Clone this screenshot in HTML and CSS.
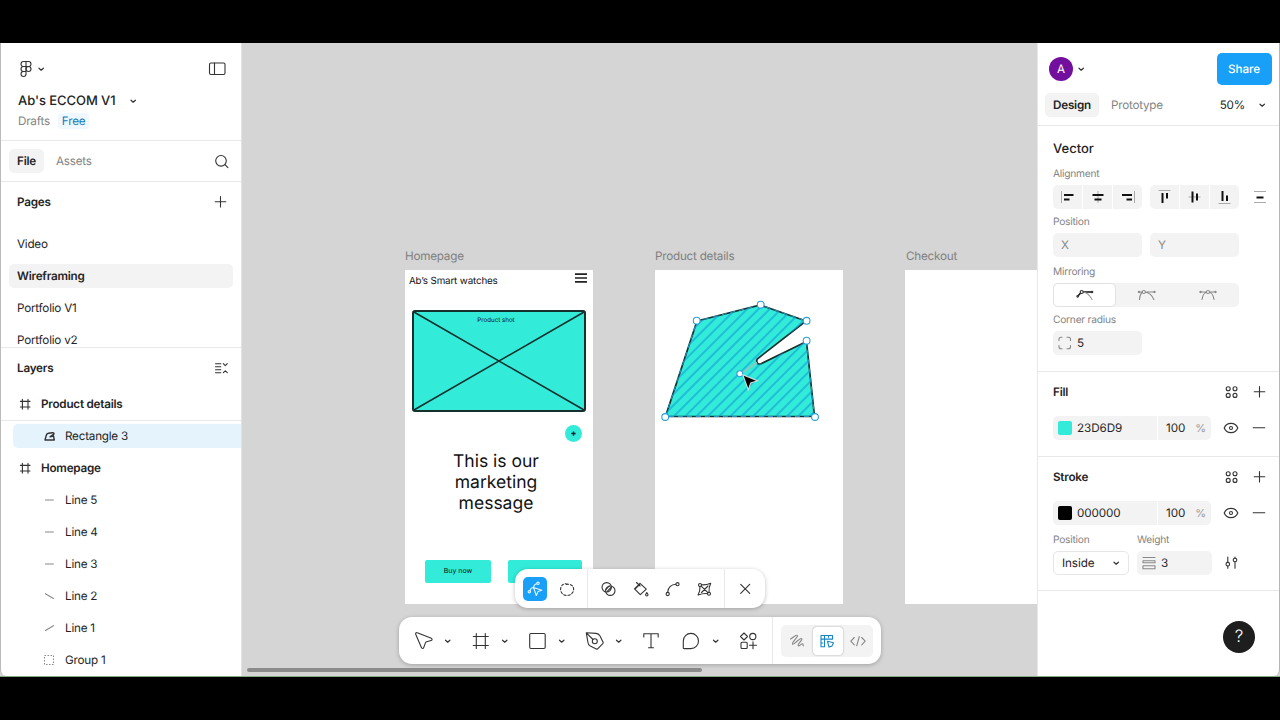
FILE: index.html
```html
<!DOCTYPE html>
<html lang="en">
<head>
  <meta charset="utf-8">
  <title>Ab's ECCOM V1</title>
  <link rel="stylesheet" href="styles.css">
</head>
<body>
  <!-- Icon sprite -->
  <svg class="sprite" xmlns="http://www.w3.org/2000/svg">
    <symbol id="chevron" viewBox="0 0 16 16"><path d="M6 7.200 8.200 9.200l2.200-2"/></symbol>
    <symbol id="plus" viewBox="0 0 24 24"><path d="M11.500 6.500v10.500M6.200 11.700h10.600"/></symbol>
    <symbol id="minus" viewBox="0 0 24 24"><path d="M6.200 11.700h11.600"/></symbol>
    <symbol id="frame" viewBox="0 0 24 24"><path d="M9.400 7.300v9.800M15 7.300v9.800M7.400 9.400h9.600M7.400 15h9.600"/></symbol>
    <symbol id="line" viewBox="0 0 24 24"><path d="M8.400 12h8"/></symbol>
    <symbol id="styles" viewBox="0 0 24 24"><circle cx="8.200" cy="8.700" r="2"/><circle cx="15" cy="8.700" r="2"/><circle cx="8.200" cy="15.400" r="2"/><circle cx="15" cy="15.400" r="2"/></symbol>
    <symbol id="eye" viewBox="0 0 24 24"><path d="M5.200 12C6.400 9 9 7.400 12 7.400S17.600 9 18.800 12C17.600 15 15 16.600 12 16.600S6.400 15 5.200 12z"/><circle cx="12" cy="12" r="1.500"/></symbol>
  </svg>

  <div class="window">
    <aside class="sidebar">
      <div class="file-head">
        <div class="file-row">
          <svg class="icon logo" viewBox="0 0 12 18"><path d="M6 1.500H3.500a2.500 2.500 0 0 0 0 5H6zM6 1.500h2.500a2.500 2.500 0 0 1 0 5H6zM6 6.500H3.500a2.500 2.500 0 0 0 0 5H6zM6 11.500H3.500A2.500 2.500 0 1 0 6 14z"/><circle cx="8.500" cy="9" r="2.500"/></svg>
          <svg class="icon chev"><use href="#chevron"/></svg>
          <svg class="icon panel-toggle" viewBox="0 0 24 24"><rect x="4.500" y="6" width="15.500" height="11.500" rx="1.500"/><path d="M9.500 6v11.500"/></svg>
        </div>
        <div class="file-name">Ab's ECCOM V1 <svg class="icon chev"><use href="#chevron"/></svg></div>
        <div class="file-meta"><span>Drafts</span><span class="plan">Free</span></div>
      </div>

      <div class="tabs">
        <span class="tab active">File</span>
        <span class="tab">Assets</span>
        <svg class="icon i24 push" viewBox="0 0 24 24"><circle cx="12" cy="11.800" r="5.300"/><path d="m15.900 15.700 3 3"/></svg>
      </div>

      <div class="pages">
        <div class="section-title">Pages <svg class="icon i24 push"><use href="#plus"/></svg></div>
        <ul class="page-list">
          <li>Video</li>
          <li class="current">Wireframing</li>
          <li>Portfolio V1</li>
          <li>Portfolio v2</li>
        </ul>
      </div>

      <div class="layers">
        <div class="section-title">Layers
          <svg class="icon i24 push" viewBox="0 0 24 24"><path d="M6.500 7.700h5.300M6.500 10.700h5.300M6.500 13.700h5.300M6.500 16.700h5.300M14.300 7.700l2 1.900 2-1.900M14.300 16.700l2-1.900 2 1.900"/></svg>
        </div>
        <ul class="layer-list">
          <li class="top sticky"><svg class="icon i24"><use href="#frame"/></svg>Product details</li>
          <li class="child selected"><div><svg class="icon i24 bold" viewBox="0 0 24 24"><path d="M8 16 9.300 11.200Q9.800 9.400 11.500 9.200L15.500 8.800Q17.300 8.700 16.900 10.200L13 12.800 16.500 12 17.300 16z"/></svg>Rectangle 3</div></li>
          <li class="top"><svg class="icon i24"><use href="#frame"/></svg>Homepage</li>
          <li class="child"><svg class="icon i24 dim"><use href="#line"/></svg>Line 5</li>
          <li class="child"><svg class="icon i24 dim"><use href="#line"/></svg>Line 4</li>
          <li class="child"><svg class="icon i24 dim"><use href="#line"/></svg>Line 3</li>
          <li class="child"><svg class="icon i24 dim" viewBox="0 0 24 24"><path d="m8.400 9.700 8 4.800"/></svg>Line 2</li>
          <li class="child"><svg class="icon i24 dim" viewBox="0 0 24 24"><path d="m8.400 14.500 8-4.800"/></svg>Line 1</li>
          <li class="child"><svg class="icon i24 dim dotted" viewBox="0 0 24 24"><rect x="7.500" y="7.500" width="9" height="9"/></svg>Group 1</li>
        </ul>
      </div>
    </aside>

    <main class="canvas">
      <div class="artboard homepage">
        <span class="label">Homepage</span>
        <div class="site-head">
          <span>Ab’s Smart watches</span>
          <svg class="burger" viewBox="0 0 12 10"><path d="M0 1.200h12M0 5h12M0 8.800h12"/></svg>
        </div>
        <div class="product-shot">
          <svg viewBox="0 0 170 98" preserveAspectRatio="none"><path d="M0 0l170 98M170 0 0 98"/></svg>
          <span>Product shot</span>
        </div>
        <div class="add-dot"><svg viewBox="0 0 16 16"><path d="M8 6v4M6 8h4"/></svg></div>
        <p class="message">This is our marketing message</p>
        <div class="cta-row">
          <span class="cta">Buy now</span>
          <span class="cta wide"></span>
        </div>
      </div>

      <div class="artboard details">
        <span class="label">Product details</span>
        <svg class="shape" viewBox="655 270 188 334">
          <defs>
            <pattern id="hatch" width="8" height="8" patternUnits="userSpaceOnUse" patternTransform="rotate(45 697 321)">
              <path d="M4 0v8" stroke="#129fd9" stroke-width="1.200"/>
            </pattern>
          </defs>
          <path class="body" d="M697 321 760.500 305 806 321 757.500 358.800Q756 361 757.500 363.200 758.500 364.800 761 363.700L806.500 341.500 814.500 416.500H665.500z"/>
          <path fill="url(#hatch)" d="M697 321 760.500 305 806 321 757.500 358.800Q756 361 757.500 363.200 758.500 364.800 761 363.700L806.500 341.500 814.500 416.500H665.500z"/>
          <path class="outline" d="M665.500 416.500 697 321 760.500 305 806 321M806.500 341.500 814.500 416.500H665.500"/>
          <path class="guide" d="M757 362.500 741 373.500"/>
          <g class="points">
            <circle cx="696.700" cy="320.700" r="3.400"/><circle cx="760.700" cy="304.700" r="3.400"/><circle cx="806.600" cy="320.800" r="3.400"/><circle cx="806.600" cy="340.700" r="3.400"/><circle cx="815" cy="417" r="3.400"/><circle cx="665.200" cy="417" r="3.400"/><circle cx="739.800" cy="373.800" r="3"/>
          </g>
          <path class="cursor" d="M743.700 375.800 756 380.700 750.300 382.600 748.300 388.300z"/>
        </svg>
      </div>

      <div class="artboard checkout"><span class="label">Checkout</span></div>

      <div class="scrollbar"></div>

      <div class="toolbar vector-bar">
        <span class="vtool active"><svg class="icon i24" viewBox="0 0 24 24"><path d="m10.500 10.500 8.300 2.700-3.800 1.400-1.700 3.900zM7 14c.4-2.200 1.500-3.400 3.500-3.500M10.500 10.500c.2-1.700 1.300-3.300 3.300-3.700"/><circle cx="6.300" cy="14.700" r="1.200"/><circle cx="15" cy="6.300" r="1.200"/></svg></span>
        <span class="vtool"><svg class="icon i24" viewBox="0 0 24 24"><path stroke-dasharray="2.300 1.900" d="M12.500 7.200C9 5.500 5.600 8.500 5.600 12.300c0 3.600 2.800 6.100 6.300 6.100 3.700 0 6.700-2.600 6.700-6.200 0-4-4.300-6.200-8.600-4.200"/></svg></span>
        <span class="divider"></span>
        <span class="vtool"><svg class="icon i24" viewBox="0 0 24 24"><circle cx="10.700" cy="10.300" r="4.700"/><circle cx="14.300" cy="13.700" r="4.700"/><path d="m10 12.300 3.300-3.400M11.300 14.300l3.700-3.800"/></svg></span>
        <span class="vtool"><svg class="icon i24" viewBox="0 0 24 24"><path d="m8.500 5.500 3.600 3.500M12 6.300l6.300 5.900-6 5.500-5.800-5.900 5.500-5.500M7 12l4.500-4.500"/><path d="M18.800 15.500c-.9 1.400-1.200 1.800-1.200 2.300a1.200 1.200 0 0 0 2.400 0c0-.5-.3-.9-1.200-2.300z"/></svg></span>
        <span class="vtool"><svg class="icon i24" viewBox="0 0 24 24"><circle cx="7.700" cy="17" r="1.600"/><circle cx="17.500" cy="7.200" r="1.600"/><path d="M7.700 15.300c0-4.500 3.500-8.100 8.200-8.100"/></svg></span>
        <span class="vtool"><svg class="icon i24" viewBox="0 0 24 24"><circle cx="8" cy="8" r="1.500"/><circle cx="17" cy="16.800" r="1.500"/><path d="M9.500 7.700c3 .5 6-.2 9.200-1.500-1.500 3-1.900 6-1.700 9.100M15.500 16.700c-3.200-.6-6 .1-9.400 1.300 1.500-2.900 2-5.200 1.900-8.500M9.200 9.200l6.700 6.500M9.500 15.500l6.500-6.500"/></svg></span>
        <span class="divider"></span>
        <span class="vtool"><svg class="icon i24" viewBox="0 0 24 24"><path d="m7.700 7.300 9 9M16.700 7.300l-9 9"/></svg></span>
      </div>

      <div class="toolbar main-bar">
        <div class="tool"><svg class="icon" viewBox="0 0 32 32"><path d="M8.700 9.300c-.4-1.100.5-2 1.600-1.500l14 5.500c1.100.5 1 1.900-.1 2.200l-4.600 1.300c-.6.200-1 .5-1.200 1.100l-1.700 4.700c-.4 1.100-1.800 1.100-2.300 0z"/></svg></div>
        <svg class="icon chev"><use href="#chevron"/></svg>
        <div class="tool"><svg class="icon" viewBox="0 0 32 32"><path d="M12.300 8.500v15M21.300 8.500v15M9.300 11.500h15M9.300 20.500h15"/></svg></div>
        <svg class="icon chev"><use href="#chevron"/></svg>
        <div class="tool"><svg class="icon" viewBox="0 0 32 32"><rect x="8.700" y="8.500" width="15.500" height="15" rx="1.200"/></svg></div>
        <svg class="icon chev"><use href="#chevron"/></svg>
        <div class="tool"><svg class="icon" viewBox="0 0 32 32"><path d="m8.300 7.800 9.800.6a5 5 0 0 1 3.800 2.400l3.200 6.400c.3.600.1 1.100-.3 1.500l-4.900 5c-.5.500-1 .5-1.600.2l-6-3a4.600 4.600 0 0 1-2.400-3.700zM8.300 7.800l6.700 6.700"/><circle cx="16.800" cy="16.300" r="2.500"/></svg></div>
        <svg class="icon chev"><use href="#chevron"/></svg>
        <div class="tool"><svg class="icon" viewBox="0 0 32 32"><path d="M8.800 12V8.800h14.400V12M16 8.800v14M13.500 22.800h5"/></svg></div>
        <div class="tool"><svg class="icon" viewBox="0 0 32 32"><path d="M8.300 23.200V16a7.600 7.600 0 1 1 7.600 7.600H9.300c-.7 0-1-.2-1-.6z"/></svg></div>
        <svg class="icon chev"><use href="#chevron"/></svg>
        <div class="tool"><svg class="icon" viewBox="0 0 32 32"><path d="m12 8 3.500 3.500L12 15l-3.500-3.500zM21 16.800v7M17.500 20.300h7"/><circle cx="20.800" cy="11.500" r="3.100"/><rect x="9" y="17.300" width="6.200" height="6.200" rx="1"/></svg></div>
        <span class="divider"></span>
        <div class="mode-switch">
          <span><svg class="icon dim" viewBox="0 0 30 30"><path d="M9.500 13C12 11.500 15 8.600 16.300 9.400c1.500 1.100-6 7.300-4.800 8.700 1.300 1.300 7.500-6.900 9.200-5.600 1.500 1.200-4.600 5.800-3.600 7.200.9 1.100 3.300-2.300 4.500-2 .9.300 0 1.700.8 2.200"/></svg></span>
          <span class="on"><svg class="icon" viewBox="0 0 30 30"><path d="M9 9.500h11.500v3.600h-8v7.700H9zM12.500 9.500v3.600M9 13.100h3.500M16.500 9.500v1.800M9 17h1.700M15.500 15.300l6 1.400-1.700 3.500-2.800.9z"/></svg></span>
          <span><svg class="icon dim" viewBox="0 0 30 30"><path d="m11.300 11.500-3.500 3.700 3.500 3.700M18.700 11.500l3.500 3.700-3.500 3.700M16.300 10.500l-2.600 9.300"/></svg></span>
        </div>
      </div>
    </main>

    <aside class="inspector">
      <div class="user-row">
        <span class="avatar">A</span>
        <svg class="icon chev"><use href="#chevron"/></svg>
        <button class="share">Share</button>
      </div>
      <div class="mode-row">
        <span class="tab active">Design</span>
        <span class="tab">Prototype</span>
        <span class="zoom">50%</span>
        <svg class="icon chev"><use href="#chevron"/></svg>
      </div>

      <section class="group vector">
        <h2>Vector</h2>
        <label>Alignment</label>
        <div class="row">
          <div class="align-set">
            <span><svg viewBox="0 0 24 24"><path class="thin" d="M5.500 6v12"/><path class="bar" d="M8 10h9.500M8 14.500h5.500"/></svg></span>
            <span><svg viewBox="0 0 24 24"><path class="thin" d="M12 6v12"/><path class="bar" d="M6.500 10h11M8.500 14.500h7"/></svg></span>
            <span><svg viewBox="0 0 24 24"><path class="thin" d="M18.500 6v12"/><path class="bar" d="M6 10h10M10.500 14.500H16"/></svg></span>
          </div>
          <div class="align-set">
            <span><svg viewBox="0 0 24 24"><path class="thin" d="M5.500 5.500h12"/><path class="bar" d="M9.500 8v10M14 8v5.500"/></svg></span>
            <span><svg viewBox="0 0 24 24"><path class="thin" d="M5.500 12h12"/><path class="bar" d="M9.500 6.500v11M14 8.500v7"/></svg></span>
            <span><svg viewBox="0 0 24 24"><path class="thin" d="M5.500 18.500h12"/><path class="bar" d="M9.500 6v10M14 10.500V16"/></svg></span>
          </div>
          <svg class="spacing" viewBox="0 0 24 24"><path class="thin" d="M6 6.500h12M6 17.500h12"/><path class="bar" d="M8.500 12.500h7"/></svg>
        </div>
        <label>Position</label>
        <div class="row">
          <div class="field axis">X</div>
          <div class="field axis">Y</div>
        </div>
        <label class="mirror-label">Mirroring</label>
        <div class="mirror">
          <span class="on"><svg class="icon" viewBox="0 0 24 24"><path class="heavy" d="M4.500 13.500 8.500 9H19"/><path class="faint" d="M10 9c4 .5 7 3.500 9 7.500"/><circle cx="8.700" cy="9" r="1.500"/><circle class="dot" cx="4.700" cy="13.300" r=".8"/><circle class="dot" cx="19" cy="9" r=".8"/></svg></span>
          <span><svg class="icon dim" viewBox="0 0 24 24"><path d="M4 9h15.500M4.500 16.500C4.800 13 5.500 10.500 7.500 9M10 9c4 .7 7.300 3.700 8.800 7.500"/><circle cx="8.800" cy="9" r="1.500"/><circle class="dot" cx="4" cy="9" r=".6"/><circle class="dot" cx="19.500" cy="9" r=".6"/></svg></span>
          <span><svg class="icon dim" viewBox="0 0 24 24"><path d="M4.300 9h15.400M6 16.500C6.500 12 9 9 12 9s5.500 3 6 7.500"/><circle cx="12" cy="9" r="1.500"/><circle class="dot" cx="4.500" cy="9" r=".6"/><circle class="dot" cx="19.500" cy="9" r=".6"/></svg></span>
        </div>
        <label class="corner-label">Corner radius</label>
        <div class="field corner"><svg class="icon i24 dim" viewBox="0 0 24 24"><path d="M6 9.500V8.200a2 2 0 0 1 2-2h1M14 6.200h1.500a2 2 0 0 1 2 2v1.300M17.500 14.500v1.300a2 2 0 0 1-2 2H14M9 17.800H8a2 2 0 0 1-2-2v-1.300"/></svg>5</div>
      </section>

      <section class="group fill">
        <div class="group-head"><h3>Fill</h3><svg class="icon i24"><use href="#styles"/></svg><svg class="icon i24"><use href="#plus"/></svg></div>
        <div class="paint">
          <div class="field colour"><i class="swatch teal"></i>23D6D9</div>
          <div class="field opacity">100 <em>%</em></div>
          <svg class="icon i24"><use href="#eye"/></svg>
          <svg class="icon i24"><use href="#minus"/></svg>
        </div>
      </section>

      <section class="group stroke">
        <div class="group-head"><h3>Stroke</h3><svg class="icon i24"><use href="#styles"/></svg><svg class="icon i24"><use href="#plus"/></svg></div>
        <div class="paint">
          <div class="field colour"><i class="swatch black"></i>000000</div>
          <div class="field opacity">100 <em>%</em></div>
          <svg class="icon i24"><use href="#eye"/></svg>
          <svg class="icon i24"><use href="#minus"/></svg>
        </div>
        <div class="stroke-opts">
          <label>Position</label>
          <label>Weight</label>
          <span></span>
          <div class="select">Inside <svg class="icon chev"><use href="#chevron"/></svg></div>
          <div class="field weight"><svg class="icon i24 dim" viewBox="0 0 24 24"><path d="M6 6.500h12"/><rect x="6" y="9.700" width="12" height="2"/><rect x="6" y="14.800" width="12" height="3"/></svg>3</div>
          <svg class="icon i24" viewBox="0 0 24 24"><path d="M7.800 6v5.500M7.800 15v2.300M15 6v1.200M15 10.800v6.500"/><circle cx="7.800" cy="13.200" r="1.800"/><circle cx="15" cy="9" r="1.800"/></svg>
        </div>
      </section>

      <span class="help">?</span>
    </aside>
  </div>
</body>
</html>
```
FILE: styles.css
```css
:root {
  --text: #242424;
  --muted: #848484;
  --line: #e8e8e8;
  --field: #f3f3f3;
  --blue: #189ff8;
  --teal: #32ebd8;
  --canvas: #d5d5d5;
}

* {
  box-sizing: border-box;
  margin: 0;
  padding: 0;
}

body {
  width: 1280px;
  height: 720px;
  padding: 43px 0;
  overflow: hidden;
  background: #000;
  color: var(--text);
  font-family: Inter, sans-serif;
  font-size: 11.700px;
  letter-spacing: -.23px;
  line-height: 16px;
  text-rendering: geometricPrecision;
}

ul {
  list-style: none;
}

.sprite {
  display: none;
}

.window {
  display: grid;
  grid-template-columns: 242px 1fr 243px;
  height: 634px;
  overflow: hidden;
  background: var(--canvas);
  border-bottom: 1px solid #87a987;
}

/* Icons */
.icon {
  flex: none;
  fill: none;
  stroke: #333;
  stroke-width: 1.1;
  stroke-linecap: round;
  stroke-linejoin: round;
}

.i24 {
  width: 24px;
  height: 24px;
}

.chev {
  width: 16px;
  height: 16px;
  stroke-width: 1.2;
}

.dim {
  stroke: #888;
}

.bold {
  stroke-width: 1.400;
}

.push {
  margin-left: auto;
}

.dot {
  fill: currentColor;
}

/* Left sidebar */
.sidebar {
  background: #fff;
  border-left: 1px solid #bbb;
  border-right: 1px solid #e2e2e2;
  border-bottom-left-radius: 6px;
  overflow: hidden;
}

.file-head {
  height: 98px;
  padding: 13px 12px 0 17px;
  border-bottom: 1px solid var(--line);
}

.file-row {
  display: flex;
  align-items: center;
  height: 25px;
}

.logo {
  width: 16px;
  height: 18px;
}

.file-row .chev {
  margin-left: -1px;
}

.panel-toggle {
  width: 24px;
  height: 24px;
  margin-left: auto;
}

.file-name {
  display: flex;
  align-items: center;
  height: 20px;
  margin-top: 9.500px;
  font-size: 13px;
  font-weight: 500;
  letter-spacing: -.060px;
}

.file-name .chev {
  margin-left: 9px;
}

.file-meta {
  display: flex;
  align-items: center;
  gap: 8px;
  height: 20px;
  color: var(--muted);
}

.plan {
  padding: 0 4px;
  border-radius: 4px;
  background: #eff8fe;
  color: #1779b8;
}

.tabs {
  display: flex;
  align-items: center;
  height: 41px;
  padding: 0 8px;
  border-bottom: 1px solid var(--line);
}

.tab {
  padding: 4px 8px;
  border-radius: 5px;
  color: var(--muted);
}

.tab.active {
  background: var(--field);
  color: var(--text);
  font-weight: 600;
}

.tabs .tab + .tab {
  margin-left: 4px;
}

.section-title {
  display: flex;
  align-items: center;
  height: 40px;
  padding: 0 8px 0 16px;
  font-weight: 600;
}

.pages {
  height: 166px;
  overflow: hidden;
  border-bottom: 1px solid var(--line);
}

.page-list {
  padding: 6px 8px;
}

.page-list li {
  height: 24px;
  margin: 4px 0 8px;
  padding: 4px 8px;
  border-radius: 5px;
}

.page-list .current {
  background: var(--field);
  font-weight: 600;
}

.layer-list li,
.layer-list li div {
  display: flex;
  align-items: center;
}

.layer-list li {
  height: 32px;
}

.layer-list .top {
  gap: 4px;
  padding-left: 12px;
  font-weight: 600;
}

.layer-list .sticky {
  box-shadow: 0 1px 0 var(--line);
}

.layer-list .child {
  gap: 4px;
  padding-left: 36px;
}

.layer-list .selected {
  padding-left: 12px;
}

.selected div {
  gap: 4px;
  width: 100%;
  height: 24px;
  padding-left: 24px;
  border-radius: 5px 0 0 5px;
  background: #e5f4fc;
}

.dotted {
  stroke-linecap: butt;
  stroke-dasharray: 1.500 1.500;
}

/* Canvas */
.canvas {
  position: relative;
  overflow: hidden;
}

.artboard {
  position: absolute;
  top: 227px;
  width: 188px;
  height: 333.500px;
  background: #fff;
}

.homepage {
  left: 163px;
  padding: 3px 8px 0;
  color: #111;
}

.details {
  left: 413px;
}

.checkout {
  left: 663px;
}

.label {
  position: absolute;
  left: 0;
  top: -22px;
  color: #808080;
  white-space: nowrap;
}

.checkout .label {
  left: 1px;
}

.site-head {
  display: flex;
  justify-content: space-between;
  height: 37px;
  margin: 0 -2px 0 -4px;
  font-size: 9.800px;
  letter-spacing: -.150px;
}

.site-head span {
  padding-top: 1px;
}

.burger {
  width: 12px;
  height: 10px;
  stroke: #222;
  stroke-width: 1.7;
}

.product-shot {
  display: flex;
  justify-content: center;
  position: relative;
  width: 174px;
  height: 102px;
  margin-left: -1px;
  background: var(--teal);
  border: 2px solid #16302e;
  border-radius: 3px;
  font-size: 6.200px;
  letter-spacing: 0;
  line-height: 17px;
}

.product-shot span {
  margin-right: 6px;
}

.product-shot svg {
  position: absolute;
  inset: 0;
  width: 100%;
  height: 100%;
  stroke: #16302e;
  stroke-width: 1.600;
}

.add-dot {
  width: 17px;
  height: 17px;
  margin: 13px 0 0 152px;
  border-radius: 50%;
  background: var(--teal);
}

.add-dot svg {
  display: block;
  stroke: #123;
  stroke-width: 1.300;
}

.message {
  width: 110px;
  margin: 9px auto 0 28px;
  font-size: 17.500px;
  letter-spacing: 0;
  line-height: 21px;
  text-align: center;
}

.cta-row {
  display: flex;
  gap: 17px;
  margin: 46px 0 0 12px;
}

.cta {
  width: 66px;
  height: 23px;
  border-radius: 2px;
  background: var(--teal);
  font-size: 7px;
  letter-spacing: 0;
  line-height: 22px;
  text-align: center;
}

.cta.wide {
  width: 74px;
}

.shape {
  position: absolute;
  left: 0;
  top: 0;
  width: 188px;
  height: 334px;
}

.shape .body {
  fill: var(--teal);
  stroke: #15302f;
  stroke-width: 1.700;
}

.shape .outline {
  fill: none;
  stroke: #2a94bf;
  stroke-width: 1;
  stroke-dasharray: 5 4;
}

.shape .guide {
  stroke: #8fc7bd;
  stroke-width: 2;
}

.points circle {
  fill: #fff;
  stroke: #2d9fd8;
  stroke-width: 1.100;
}

.cursor {
  fill: #000;
  stroke: #d8dedd;
  stroke-width: 2;
  paint-order: stroke;
}

.scrollbar {
  position: absolute;
  left: 5px;
  bottom: 4px;
  width: 455px;
  height: 4px;
  border-radius: 2px;
  background: #8b8b8b;
}

.toolbar {
  position: absolute;
  display: flex;
  align-items: center;
  gap: 8px;
  padding: 0 8px;
  border-radius: 13px;
  background: #fff;
  box-shadow: 0 1px 4px rgba(0, 0, 0, .25);
}

.vector-bar {
  left: 273px;
  top: 526px;
  width: 250px;
  height: 39px;
}

.main-bar {
  left: 157px;
  top: 574px;
  width: 482px;
  height: 47px;
}

.divider {
  align-self: stretch;
  width: 1px;
  background: #e9e9e9;
}

.vtool {
  height: 24px;
  border-radius: 5px;
}

.vtool.active {
  background: var(--blue);
}

.vtool.active .icon {
  stroke: #e8f6ff;
}

.tool,
.tool svg {
  width: 32px;
  height: 32px;
}

.tool + .chev {
  width: 17px;
  margin-left: -8px;
}

.mode-switch {
  display: flex;
  width: 92px;
  height: 32px;
  border-radius: 5px;
  background: var(--field);
}

.main-bar .divider {
  flex: none;
}

.mode-switch span {
  flex: 1;
  padding-top: 1px;
}

.mode-switch svg {
  width: 30px;
  height: 30px;
}

.mode-switch .on {
  margin: 2px 0 2px 2px;
  padding: 0;
  border-radius: 4px;
  background: #fff;
  box-shadow: 0 0 2px rgba(0, 0, 0, .35);
}

.mode-switch .on svg {
  margin: -1px;
  stroke: #1585c8;
}

/* Right inspector */
.inspector {
  position: relative;
  background: #fff;
  border-left: 1px solid #e8e8e8;
  border-right: 1px solid #b5b5b5;
  border-bottom-right-radius: 6px;
}

.user-row {
  display: flex;
  align-items: center;
  height: 50px;
  padding: 1px 7.500px 0 11px;
}

.avatar {
  width: 24px;
  height: 24px;
  border-radius: 50%;
  background: #720f9c;
  color: #fff;
  line-height: 24px;
  text-align: center;
}

.share {
  width: 55px;
  height: 32px;
  margin-left: auto;
  border: none;
  border-radius: 5px;
  background: var(--blue);
  color: #fff;
  font: 500 11.700px Inter, sans-serif;
  letter-spacing: -.1px;
  text-rendering: inherit;
}

.mode-row {
  display: flex;
  align-items: center;
  height: 33px;
  padding: 0 9px 9px 7px;
  border-bottom: 1px solid var(--line);
}

.mode-row .tab + .tab {
  margin-left: 4px;
}

.zoom {
  margin: 0 9px 0 auto;
}

.group {
  padding-left: 15px;
  border-bottom: 1px solid var(--line);
}

.group.vector {
  height: 246px;
  padding-top: 14px;
}

h2 {
  font-size: 13px;
  font-weight: 500;
  letter-spacing: 0;
  line-height: 18px;
}

h3 {
  font-size: 11.700px;
  font-weight: 600;
}

label {
  display: block;
  color: var(--muted);
  font-size: 10.200px;
  line-height: 14px;
}

.row {
  display: flex;
  gap: 8px;
  margin: 4px 0 6px;
}

h2 + label {
  margin-top: 9px;
}

.align-set {
  display: flex;
  gap: 1px;
  width: 89px;
  overflow: hidden;
  border-radius: 5px;
}

.align-set span {
  flex: 1;
  height: 24px;
  background: var(--field);
  text-align: center;
}

.align-set svg,
.spacing {
  width: 24px;
  height: 24px;
}

.thin {
  stroke: #aaa;
  stroke-width: 1;
}

.bar {
  stroke: #111;
  stroke-width: 2;
}

.spacing {
  margin: 0 -1px;
  transform: translateX(2px);
}

.field {
  display: flex;
  align-items: center;
  height: 24px;
  border-radius: 5px;
  background: var(--field);
}

.axis {
  width: 89px;
  padding-left: 8px;
  color: #888;
}

.mirror-label {
  padding-top: 2px;
}

.mirror {
  display: flex;
  width: 186px;
  height: 24px;
  margin: 4px 0 6px;
  border-radius: 5px;
  background: var(--field);
}

.mirror span {
  flex: 1;
  height: 24px;
  text-align: center;
}

.mirror svg {
  width: 24px;
  height: 24px;
}

.mirror .on {
  border: 1px solid #e2e2e2;
  border-radius: 5px;
  background: #fff;
}

.mirror .on svg {
  margin-top: -1px;
}

.mirror circle {
  fill: #fff;
}

.mirror .heavy {
  stroke: #111;
  stroke-width: 1.500;
}

.mirror .faint {
  stroke: #999;
}

.corner {
  width: 89px;
  margin-top: 4px;
}

.fill {
  height: 85px;
}

.stroke {
  height: 134px;
}

.group-head {
  display: flex;
  align-items: center;
  gap: 4px;
  height: 40px;
  padding-right: 7.500px;
}

.group-head h3 {
  margin-right: auto;
}

.paint {
  display: flex;
  gap: 1px;
  margin-top: 4px;
}

.stroke .paint {
  margin-top: 3.500px;
}

.colour {
  width: 104px;
  border-radius: 5px 0 0 5px;
  letter-spacing: -.1px;
}

.opacity {
  width: 53px;
  padding-left: 8px;
  border-radius: 0 5px 5px 0;
  letter-spacing: -.1px;
}

.opacity em {
  margin-left: 10px;
  color: #999;
  font-size: 11px;
  font-style: normal;
}

.paint .i24 {
  margin-left: 7px;
}

.paint .i24 + .i24 {
  margin-left: 3px;
}

.swatch {
  width: 14px;
  height: 14px;
  margin: 0 5px;
  border-radius: 2px;
}

.teal {
  background: var(--teal);
}

.black {
  background: #000;
}

.stroke-opts {
  display: grid;
  grid-template-columns: 76px 75px 24px;
  column-gap: 8px;
  row-gap: 4px;
  margin-top: 8px;
}

.select {
  display: flex;
  align-items: center;
  justify-content: space-between;
  height: 24px;
  padding: 0 4px 0 8px;
  border: 1px solid #e6e6e6;
  border-radius: 5px;
  letter-spacing: -.1px;
}

.help {
  position: absolute;
  right: 24px;
  bottom: 23px;
  width: 32px;
  height: 32px;
  border-radius: 50%;
  background: #1e1e1e;
  color: #fff;
  font-size: 17px;
  font-weight: 300;
  line-height: 32px;
  text-align: center;
}
```
